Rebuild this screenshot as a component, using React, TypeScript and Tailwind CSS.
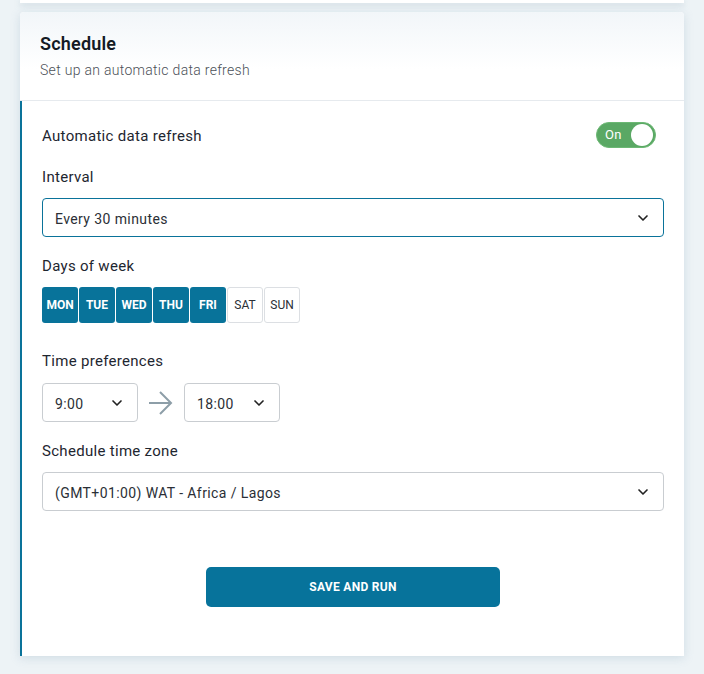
import { ChevronDown } from "lucide-react";

const days = [
  { label: "MON", on: true },
  { label: "TUE", on: true },
  { label: "WED", on: true },
  { label: "THU", on: true },
  { label: "FRI", on: true },
  { label: "SAT", on: false },
  { label: "SUN", on: false },
];

function Select({ value, className }: { value: string; className: string }) {
  return (
    <div
      className={
        "flex items-center justify-between h-[39px] rounded-[4px] border bg-white pl-[12px] pr-[12px] text-[14px] tracking-[0.4px] text-[#2b2f36] " +
        className
      }
    >
      <span className="pt-[3px]">{value}</span>
      <ChevronDown size={16} strokeWidth={2.5} className="text-[#222]" />
    </div>
  );
}

export default function App() {
  return (
    <div
      className="w-[704px] h-[674px] overflow-hidden bg-[#edf3f6] text-[#1e2630]"
      style={{ fontFamily: "Roboto, 'Noto Sans', sans-serif" }}
    >
      {/* previous card, only its bottom edge shows */}
      <div className="mx-[20px] h-[3px] bg-white shadow-[0_2px_6px_rgba(120,150,170,0.35)]" />

      <div className="mx-[20px] mt-[9px] h-[644px] rounded-t-[4px] bg-white shadow-[0_2px_10px_rgba(140,170,190,0.3)] flex flex-col">
        <div className="h-[89px] rounded-t-[4px] bg-gradient-to-b from-[#f2f6f9] to-white to-[65%] border-b border-[#e6eaee] pl-[20px] pt-[21px]">
          <h2 className="text-[18px] font-semibold leading-[22px] tracking-[0.2px] text-[#141a24]">Schedule</h2>
          <p className="mt-[5px] text-[14px] leading-[20px] tracking-[0.3px] font-light text-[#4b5057]">
            Set up an automatic data refresh
          </p>
        </div>

        <div className="flex-1 border-l-2 border-[#0a739a] pl-[20px] pr-[20px] pt-[21px] tracking-[0.3px]">
          <div className="flex items-center justify-between h-[26px]">
            <span className="text-[15px] text-[#1e2630] pt-[2px]">Automatic data refresh</span>
            <div className="mr-[8px] flex items-center w-[60px] h-[26px] rounded-full bg-[#5aa864] border border-[#6cb874] pl-[8px] pr-[2px]">
              <span className="text-[13px] text-white flex-1">On</span>
              <span className="w-[22px] h-[22px] rounded-full bg-white" />
            </div>
          </div>

          <div className="mt-[19px] text-[15px] leading-[20px]">Interval</div>
          <Select value="Every 30 minutes" className="mt-[11px] border-[#0a739a]" />

          <div className="mt-[19px] text-[15px] leading-[20px]">Days of week</div>
          <div className="mt-[11px] flex gap-[1px] tracking-normal">
            {days.map((d) =>
              d.on ? (
                <div
                  key={d.label}
                  className="w-[36px] h-[36px] rounded-[3px] bg-[#08739a] text-white text-[12px] font-bold flex items-center justify-center"
                >
                  {d.label}
                </div>
              ) : (
                <div
                  key={d.label}
                  className="w-[36px] h-[36px] rounded-[3px] bg-white border border-[#dcdfe3] text-[#2b2f36] text-[12px] flex items-center justify-center"
                >
                  {d.label}
                </div>
              )
            )}
          </div>

          <div className="mt-[28px] text-[15px] leading-[20px]">Time preferences</div>
          <div className="mt-[12px] flex items-center">
            <Select value="9:00" className="w-[96px] border-[#c9cdd1]" />
            <svg width="24" height="26" viewBox="0 0 24 26" className="mx-[11px]" fill="none">
              <path d="M0 13 H22 M11 2 L22 13 L11 24" stroke="#8d9ea8" strokeWidth="2" />
            </svg>
            <Select value="18:00" className="w-[96px] border-[#c9cdd1]" />
          </div>

          <div className="mt-[19px] text-[15px] leading-[20px]">Schedule time zone</div>
          <Select value="(GMT+01:00) WAT - Africa / Lagos" className="mt-[11px] border-[#c9cdd1]" />

          <div className="mt-[56px] flex justify-center">
            <button className="w-[294px] h-[40px] rounded-[5px] bg-[#07739b] text-white text-[12px] font-bold tracking-[0.3px]">
              SAVE AND RUN
            </button>
          </div>
        </div>
      </div>
    </div>
  );
}
